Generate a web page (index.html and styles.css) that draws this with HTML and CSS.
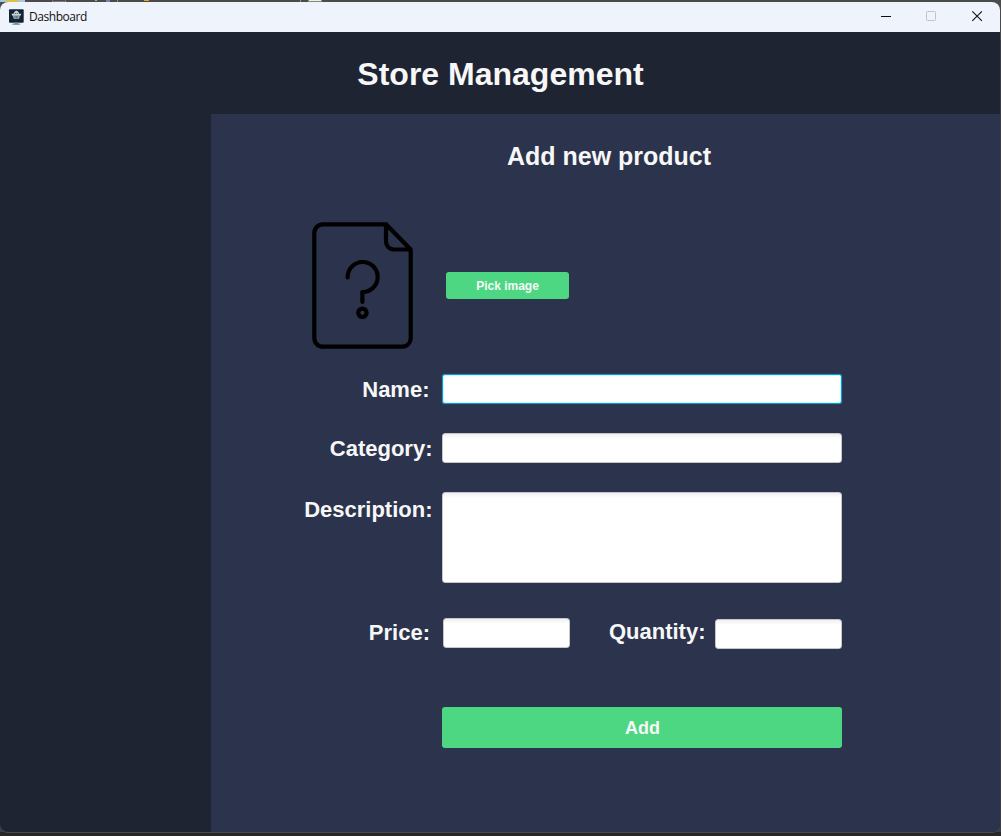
FILE: index.html
```html
<!DOCTYPE html>
<html lang="en">
<head>
<meta charset="utf-8">
<title>Dashboard</title>
<link rel="stylesheet" href="styles.css">
</head>
<body>
<div class="backdrop">
  <div class="backdrop-top">
    <svg width="1001" height="5" shape-rendering="crispEdges">
      <rect x="0" y="0" width="25" height="2" fill="#a9c6dc"/>
      <rect x="6" y="0" width="12" height="2" fill="#d8c24a"/>
      <rect x="52" y="0" width="1" height="2" fill="#777"/>
      <rect x="52" y="1" width="14" height="1" fill="#777"/>
      <rect x="65" y="0" width="1" height="2" fill="#777"/>
      <rect x="95" y="0" width="2" height="1" fill="#aaa"/>
      <rect x="106" y="0" width="4" height="2" fill="#6f87a5"/>
      <rect x="117" y="0" width="1" height="2" fill="#888"/>
      <rect x="144" y="0" width="5" height="1" fill="#e6a62c"/>
      <rect x="300" y="0" width="1" height="2" fill="#999"/>
      <rect x="308" y="0" width="14" height="2" fill="#8b8a6a"/>
      <rect x="309" y="0" width="12" height="1" fill="#e4eff0"/>
    </svg>
  </div>
  <div class="window">
    <header class="titlebar">
      <svg class="app-icon" width="16" height="16" viewBox="0 0 16 16">
        <rect x="1" y="0.3" width="14.700" height="13.500" rx="1" fill="#102431"/>
        <path d="M6.500 13.500h3.600l.6 1.700H5.900z" fill="#8b9ba5"/>
        <path d="M4.300 15.200h8" stroke="#54656f" stroke-width=".8"/>
        <path d="M3.500 4.700h9.800l-.8 2H4.300z" fill="#c8d4d9"/>
        <path d="M4.800 6.300h7.200l-1 3.800H5.800z" fill="#9eafb7"/>
        <path d="M6 4.900 7.600 2.300M10.800 4.900 9.200 2.300M8.400 1.700v3" stroke="#c8d4d9" stroke-width="1.200"/>
        <path d="M7 7v2.500M8.400 7v2.500M9.800 7v2.500" stroke="#32434e" stroke-width=".6"/>
      </svg>
      <span class="window-title">Dashboard</span>
      <div class="controls">
        <svg width="115" height="30" viewBox="0 0 115 30" fill="none">
          <path d="M1 14.500h10" stroke="#111"/>
          <rect x="46.500" y="9.500" width="9" height="9" rx=".8" stroke="#c1c3c8"/>
          <path d="M92.300 9.300l9.600 9.600M101.900 9.300l-9.600 9.600" stroke="#111" stroke-width="1.100"/>
        </svg>
      </div>
    </header>
    <h1 class="brand">Store Management</h1>
    <div class="body">
      <aside class="sidebar"></aside>
      <main class="panel">
        <h2 class="heading">Add new product</h2>
        <form class="form">
          <div class="media">
            <svg class="preview" width="102" height="128" viewBox="0 0 102 128" fill="none" stroke="#000" stroke-width="4.200" stroke-linecap="round" stroke-linejoin="round">
              <path d="M74 2.300H11a8.700 8.700 0 0 0-8.700 8.700v105a8.700 8.700 0 0 0 8.700 8.700h79.200A8.500 8.500 0 0 0 98.700 116V27.500L74 2.300v17.200a8 8 0 0 0 8 8h16.700"/>
              <path d="M35.700 55.500a15 15 0 1 1 14.700 14.500v10"/>
              <circle cx="50.400" cy="90.800" r="4.200"/>
            </svg>
            <button class="btn pick" type="button">Pick image</button>
          </div>
          <div class="row">
            <label class="label short" for="name">Name:</label>
            <input class="field focused" id="name" type="text">
          </div>
          <div class="row">
            <label class="label" for="category">Category:</label>
            <input class="field" id="category" type="text">
          </div>
          <div class="row description">
            <label class="label" for="description">Description:</label>
            <textarea class="field area" id="description"></textarea>
          </div>
          <div class="row numbers">
            <label class="label short" for="price">Price:</label>
            <input class="field small" id="price" type="text">
            <label class="label quantity" for="quantity">Quantity:</label>
            <input class="field small offset" id="quantity" type="text">
          </div>
          <button class="btn add" type="button">Add</button>
        </form>
      </main>
    </div>
  </div>
</div>
</body>
</html>
```
FILE: styles.css
```css
* { box-sizing: border-box; }
body { margin: 0; font-family: "Liberation Sans", Arial, sans-serif; }

.backdrop {
  width: 1001px;
  height: 836px;
  overflow: hidden;
  background: linear-gradient(#4b4b4b 0 40px, #3a3d42 40px 832px, #272727 832px);
}
.backdrop-top { height: 2px; }
.backdrop-top svg { display: block; }

.window {
  position: relative;
  display: flex;
  flex-direction: column;
  width: 1000px;
  height: 830px;
  overflow: hidden;
  border-radius: 8px;
  background: #1f2433;
  box-shadow: 0 1px 0 #4a4a4a;
}

.titlebar {
  display: flex;
  flex: none;
  align-items: center;
  height: 30px;
  padding-left: 8px;
  background: #eff3fb;
}
.app-icon { margin: 0 5px 1px 0; }
.window-title {
  padding-bottom: 1px;
  font: 12px/20px "Open Sans", "Noto Sans", sans-serif;
  letter-spacing: -0.45px;
  color: #111;
}
.controls { height: 30px; margin-left: auto; padding-right: 5px; }
.controls svg { display: block; }

.brand {
  flex: none;
  height: 82px;
  margin: 0;
  padding-left: 1px;
  font-size: 32px;
  line-height: 85px;
  text-align: center;
  color: #f7f7f8;
}

.body { display: flex; flex: 1; }
.sidebar { width: 211px; }
.panel { flex: 1; background: #2c334c; }
.heading {
  height: 84px;
  margin: 0 0 24px;
  padding-left: 7px;
  font-size: 25px;
  line-height: 84px;
  text-align: center;
  color: #f7f7f8;
}

.form { width: 631px; }
.media {
  display: flex;
  align-items: center;
  height: 128px;
  margin-bottom: 24px;
  padding-left: 101px;
}
.preview { flex: none; }

.btn {
  display: block;
  padding: 0;
  border: 0;
  border-radius: 3px;
  background: #4dd783;
  font-family: inherit;
  font-weight: bold;
  color: #f7f7f8;
}
.pick { width: 123px; height: 27px; margin: 0 0 1px 32px; font-size: 12px; }
.add {
  width: 400px;
  height: 41px;
  margin-left: 231px;
  padding: 1px 0 0 1px;
  font-size: 18px;
}

.row { display: flex; height: 30px; margin-bottom: 29px; }
.label {
  width: 231px;
  padding-right: 9.5px;
  font-size: 22px;
  font-weight: bold;
  line-height: 31px;
  text-align: right;
  color: #f7f7f8;
}
.label.short { padding-right: 12.5px; }
.description { height: 91px; margin-bottom: 35px; }
.description .label { line-height: 35px; }
.numbers { height: 30px; margin-bottom: 59px; }
.numbers .label.short { width: 232px; padding-right: 13px; line-height: 29px; }
.label.quantity { width: 145px; line-height: 27px; }

.field {
  width: 400px;
  height: 30px;
  padding: 4px 8px;
  border: 1px solid #c5c6ca;
  border-radius: 3px;
  outline: 0;
  background: linear-gradient(#f0f0f0, #fff 5px);
  font: 14px "Liberation Sans", Arial, sans-serif;
}
.field.area { display: block; height: 91px; resize: none; }
.field.small { width: 127px; }
.field.offset { margin-top: 1px; }
.field.focused {
  border-color: #039ed3;
  background: #fff;
  box-shadow: 0 0 1px #0793c4, inset 0 0 0 1px #d9f0f8;
}
```
